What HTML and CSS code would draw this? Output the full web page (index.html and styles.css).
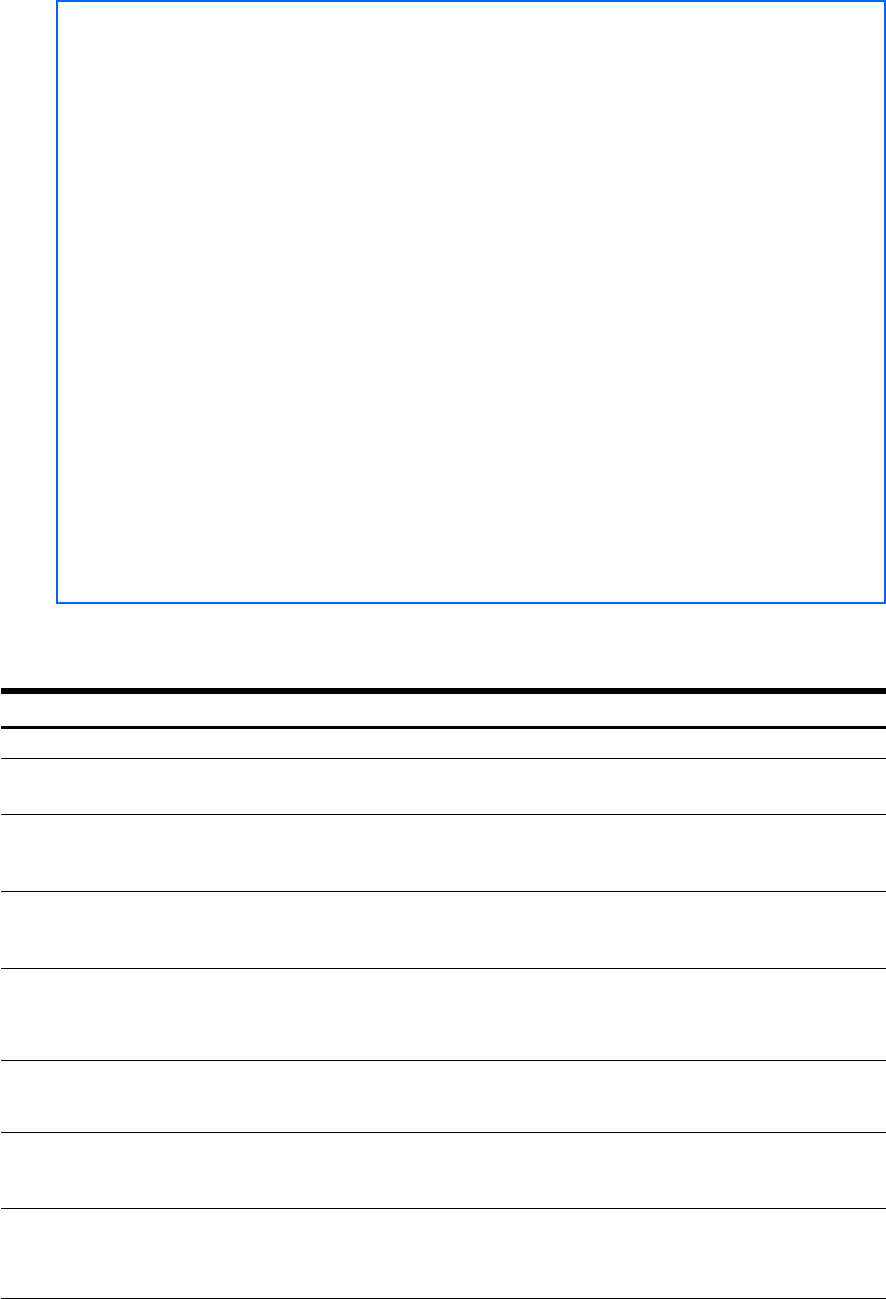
FILE: index.html
```html
<!DOCTYPE html>
<html lang="en">
<head>
    <meta charset="UTF-8">
    <meta name="viewport" content="width=device-width, initial-scale=1.0">
    <title>Sheet</title>
    <link rel="stylesheet" href="styles.css">
</head>
<body>

    <!-- Frame for the figure -->
    <div class="figure-frame"></div>

    <table class="data-table">
        <thead>
            <tr class="head-row"><th></th></tr>
            <tr class="sub-row"><th></th></tr>
        </thead>
        <tbody>
            <tr class="row-56"><td></td></tr>
            <tr class="row-76"><td></td></tr>
            <tr class="row-76"><td></td></tr>
            <tr class="row-92"><td></td></tr>
            <tr class="row-72"><td></td></tr>
            <tr class="row-75"><td></td></tr>
            <tr class="row-last"><td></td></tr>
        </tbody>
    </table>

</body>
</html>
```

FILE: styles.css
```css
body {
    margin: 0;
    font-family: "Liberation Sans", Arial, sans-serif;
    background: #fff;
}
.figure-frame {
    margin-left: 56px;
    height: 600px;
    border: 2px solid #0066ff;
}
.data-table {
    margin: 84px 0 0 1px;
    width: 885px;
    border-collapse: collapse;
    border-top: 6px solid #000;
}
.data-table th,
.data-table td {
    padding: 0;
}
.head-row th {
    height: 32px;
    border-bottom: 3px solid #000;
}
.sub-row th {
    height: 29px;
    border-bottom: 1px solid #000;
}
.data-table td {
    border-bottom: 1px solid #000;
}
.row-56 td { height: 55px; }
.row-72 td { height: 71px; }
.row-75 td { height: 75px; }
.row-76 td { height: 76px; }
.row-92 td { height: 91px; }
.row-last td { height: 89px; }
```
